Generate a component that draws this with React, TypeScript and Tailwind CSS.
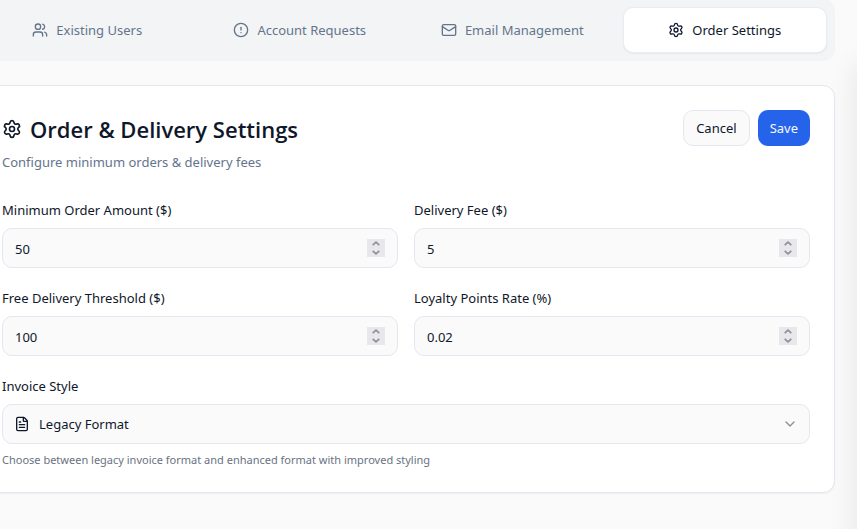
import { useState } from "react";
import type { ReactNode } from "react";
import {
  ChevronDown,
  CircleAlert,
  FileText,
  Mail,
  Settings,
  Users,
} from "lucide-react";

const tabs = [
  { label: "Existing Users", icon: Users },
  { label: "Account Requests", icon: CircleAlert },
  { label: "Email Management", icon: Mail },
  { label: "Order Settings", icon: Settings },
];

function SpinArrow({ up = false }: { up?: boolean }) {
  return (
    <svg
      viewBox="0 0 8 5"
      className="h-[5px] w-2"
      fill="none"
      stroke="currentColor"
      strokeWidth="1.6"
      aria-hidden="true"
    >
      <path d={up ? "M0.7 4.2 4 1.2l3.3 3" : "M0.7 0.8 4 3.8l3.3-3"} />
    </svg>
  );
}

function NumberField({
  id,
  label,
  initial,
  step,
}: {
  id: string;
  label: string;
  initial: number;
  step: number;
}) {
  const [value, setValue] = useState(String(initial));
  const bump = (by: number) =>
    setValue((v) => String(Number((Number(v) + by).toFixed(2))));

  return (
    <div className="flex flex-col gap-2">
      <FieldLabel htmlFor={id}>{label}</FieldLabel>
      <div className="flex h-10 items-center rounded-[10px] border border-slate-200 bg-[#fafafa] px-3">
        <input
          id={id}
          type="number"
          step={step}
          value={value}
          onChange={(e) => setValue(e.target.value)}
          className="h-full min-w-0 flex-1 bg-transparent pt-0.5 outline-none [appearance:textfield] [&::-webkit-inner-spin-button]:appearance-none"
        />
        <div className="flex flex-col bg-[#e8e8ec] text-[#8e8e98]">
          <button
            type="button"
            aria-label={`Increase ${label}`}
            onClick={() => bump(step)}
            className="flex h-[9px] w-[18px] items-center justify-center"
          >
            <SpinArrow up />
          </button>
          <button
            type="button"
            aria-label={`Decrease ${label}`}
            onClick={() => bump(-step)}
            className="flex h-[9px] w-[18px] items-center justify-center"
          >
            <SpinArrow />
          </button>
        </div>
      </div>
    </div>
  );
}

function FieldLabel({ htmlFor, children }: { htmlFor: string; children: ReactNode }) {
  return (
    <label htmlFor={htmlFor} className="leading-5">
      {children}
    </label>
  );
}

export default function App() {
  const [active, setActive] = useState("Order Settings");

  return (
    <div className="relative min-h-screen overflow-hidden bg-[#fafafa] font-['Noto_Sans','Open_Sans',sans-serif] text-[13px] text-slate-900">
      <main className="-mt-px mr-[22px] -ml-[23px] flex flex-col gap-6 pb-9">
        <nav className="grid grid-cols-4 gap-2 rounded-xl bg-gray-100 p-2">
          {tabs.map(({ label, icon: Icon }) => (
            <button
              key={label}
              type="button"
              onClick={() => setActive(label)}
              className={
                active === label
                  ? "flex h-[46px] items-center justify-center gap-2 rounded-[10px] border border-gray-200/80 bg-white leading-5 shadow-xs"
                  : "flex h-[46px] items-center justify-center gap-2 rounded-[10px] leading-5 text-[#64748b]"
              }
            >
              <Icon className="size-4" />
              {label}
            </button>
          ))}
        </nav>

        <section className="rounded-xl border border-slate-200 bg-white p-6 shadow-xs">
          <header className="flex items-start justify-between">
            <div className="flex flex-col gap-1">
              <h2 className="flex items-center gap-2 font-['Open_Sans','Noto_Sans',sans-serif] text-[22px] leading-[38px] font-semibold">
                <Settings className="size-5" />
                Order &amp; Delivery Settings
              </h2>
              <p className="leading-5 text-[#64748b]">
                Configure minimum orders &amp; delivery fees
              </p>
            </div>
            <div className="flex gap-2">
              <button
                type="button"
                className="h-9 rounded-[10px] border border-slate-200 bg-[#fafafa] px-3 pt-0.5"
              >
                Cancel
              </button>
              <button
                type="button"
                className="h-9 rounded-[10px] bg-[#2563eb] px-3 pt-0.5 text-slate-50"
              >
                Save
              </button>
            </div>
          </header>

          <form className="mt-7 flex flex-col gap-5">
            <div className="grid grid-cols-2 gap-x-4 gap-y-5">
              <NumberField id="minimum" label="Minimum Order Amount ($)" initial={50} step={1} />
              <NumberField id="fee" label="Delivery Fee ($)" initial={5} step={1} />
              <NumberField id="threshold" label="Free Delivery Threshold ($)" initial={100} step={1} />
              <NumberField id="loyalty" label="Loyalty Points Rate (%)" initial={0.02} step={0.01} />
            </div>
            <div className="flex flex-col gap-2">
              <FieldLabel htmlFor="invoice">Invoice Style</FieldLabel>
              <div className="relative">
                <select
                  id="invoice"
                  className="h-10 w-full appearance-none rounded-[10px] border border-slate-200 bg-[#fafafa] pt-0.5 pr-10 pl-9"
                >
                  <option>Legacy Format</option>
                  <option>Enhanced Format</option>
                </select>
                <FileText className="pointer-events-none absolute inset-y-0 left-3 my-auto size-4" />
                <ChevronDown className="pointer-events-none absolute inset-y-0 right-3 my-auto size-4 text-[#8e8e98]" />
              </div>
              <p className="text-[11px] leading-4 text-gray-500">
                Choose between legacy invoice format and enhanced format with improved styling
              </p>
            </div>
          </form>
        </section>
      </main>
      <aside
        aria-hidden="true"
        className="pointer-events-none absolute top-16 -bottom-10 left-full w-12 shadow-[0_0_30px_rgba(0,0,0,0.09)]"
      />
    </div>
  );
}
